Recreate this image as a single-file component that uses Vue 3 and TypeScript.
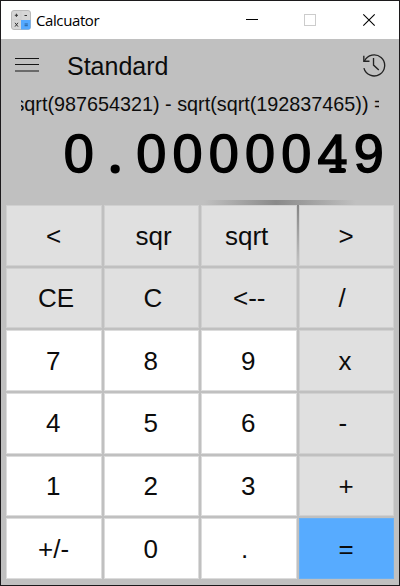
<script setup lang="ts">
interface Key {
  label: string
  kind: 'fn' | 'num' | 'eq' | 'fn hover'
}

const fn = (label: string): Key => ({ label, kind: 'fn' })
const num = (label: string): Key => ({ label, kind: 'num' })

const keys: Key[] = [
  fn('<'), fn('sqr'), fn('sqrt'), { label: '>', kind: 'fn hover' },
  fn('CE'), fn('C'), fn('<--'), fn('/'),
  num('7'), num('8'), num('9'), fn('x'),
  num('4'), num('5'), num('6'), fn('-'),
  num('1'), num('2'), num('3'), fn('+'),
  num('+/-'), num('0'), num('.'), { label: '=', kind: 'eq' },
]

// Labels start further left the longer they are
const indent = (label: string): string => `${39 - 8 * Math.floor(label.length / 2)}px`

const expression = 'sqrt(987654321) - sqrt(sqrt(192837465)) ='
const result = '0.0000049'.split('')
const glyphClass = (c: string): string => (c === '.' ? 'point' : c === '4' ? 'four' : '')
</script>

<template>
  <div class="window">
    <header class="titlebar">
      <svg class="app-icon" width="20" height="20" viewBox="0 0 20 20">
        <rect x="0.5" y="0.5" width="19" height="19" rx="2.5" fill="#d6d6d6" stroke="#b9b9b9" />
        <path d="M10 10H19.5V17.5Q19.5 19.5 17.5 19.5H10Z" fill="#55a9ff" />
        <path d="M10 1V10M1 10H10" stroke="#cacaca" stroke-width="0.7" />
        <path d="M3.8 5.3H7M5.4 3.7V6.9M13.5 5.5H16M4 12.8L7 16.6M7 12.8L4 16.6" stroke="#333" fill="none" />
        <path d="M13.6 14H16.8M13.6 15.7H16.8" stroke="#245a91" stroke-width="0.9" />
      </svg>
      <span class="app-name">Calcuator</span>
      <svg class="controls" width="130" height="14" viewBox="0 0 130 14">
        <path d="M0 6.5H12" stroke="#000" />
        <rect x="58.5" y="1.5" width="11" height="11" fill="none" stroke="#ccc" />
        <path d="M117.3 1.3L128.7 12.7M128.7 1.3L117.3 12.7" stroke="#000" stroke-width="1.1" />
      </svg>
    </header>

    <div class="mode-row">
      <svg class="menu" width="26" height="18" viewBox="0 0 26 18">
        <path d="M1 2.5H25M1 8.5H25M1 15H25" stroke="#151515" stroke-width="1.2" />
      </svg>
      <span class="mode">Standard</span>
      <svg class="history" width="24" height="24" viewBox="0 0 25 25" fill="none" stroke="#222" stroke-width="1.4">
        <path d="M2.6 8.4A11 11 0 1 1 2 15.8" />
        <path d="M1.9 2.8V8.6H7.8" />
        <path d="M12 5.2V12.6L17.5 17.8" />
      </svg>
    </div>

    <div class="expression"><span>{{ expression }}</span></div>

    <div class="result">
      <span v-for="(c, i) in result" :key="i" :class="glyphClass(c)">{{ c }}</span>
    </div>

    <div class="keypad">
      <button
        v-for="key in keys"
        :key="key.label"
        :class="['key', key.kind]"
        :style="{ paddingLeft: indent(key.label) }"
      >{{ key.label }}</button>
    </div>
  </div>
</template>

<style>
body {
  margin: 0;
}
</style>

<style scoped>
.window {
  box-sizing: border-box;
  width: 400px;
  height: 586px;
  display: flex;
  flex-direction: column;
  border: 1px solid #1c1a1c;
  background: #c0c0c0;
  color: #0c0c0c;
  font-family: "Liberation Sans", Arial, sans-serif;
  overflow: hidden;
}

.titlebar {
  flex: none;
  height: 38px;
  display: flex;
  align-items: center;
  padding: 0 23px 0 10px;
  box-sizing: border-box;
  background: #fff;
}

.app-icon {
  margin-right: 5px;
}

.app-name {
  font: 15px "Open Sans", "Noto Sans", sans-serif;
  letter-spacing: -0.4px;
  padding-bottom: 1px;
  color: #000;
}

.controls {
  margin-left: auto;
}

.mode-row {
  flex: none;
  height: 54px;
  display: flex;
  align-items: center;
  padding: 0 13px 0 13px;
}

.menu {
  margin-bottom: 2px;
}

.mode {
  margin-left: 27px;
  font-size: 25px;
  line-height: 54px;
}

.history {
  margin: 0 0 3px auto;
}

.expression {
  flex: none;
  height: 24px;
  width: 358px;
  margin-left: 20px;
  display: flex;
  justify-content: center;
  overflow: hidden;
  font-size: 19.8px;
  line-height: 22px;
  white-space: pre;
}

.expression span {
  flex: none;
}

.result {
  flex: none;
  height: 83px;
  display: grid;
  grid-template-columns: repeat(9, 36.25px);
  justify-content: end;
  padding-right: 12px;
  font-size: 54px;
  line-height: 73px;
  text-align: center;
  color: #000;
  -webkit-text-stroke: 1.5px #000;
}

.point {
  font-family: "Open Sans", sans-serif;
  font-weight: 700;
  line-height: 71px;
  -webkit-text-stroke: 0;
}

/* Typewriter-style foot under the numeral */
.four {
  position: relative;
}

.four::after {
  content: "";
  position: absolute;
  left: 14px;
  top: 51px;
  width: 17px;
  height: 5px;
  border-radius: 3px;
  background: #000;
}

.keypad {
  flex: 1;
  display: grid;
  grid-template-columns: repeat(4, 1fr);
  grid-template-rows: repeat(6, 1fr);
  column-gap: 2px;
  row-gap: 2px;
  padding: 5px 5px 6px 5px;
  background:
    linear-gradient(90deg, transparent 203px, #8a8a8a 275px, transparent 355px) 0 0 / 100% 5px no-repeat,
    linear-gradient(#858585, transparent) 295px 5px / 4px 56px no-repeat;
}

.key {
  min-width: 0;
  margin: 0;
  padding: 0;
  border: 1px solid #d0d0d0;
  border-radius: 0;
  background: #e0e0e0;
  color: #0c0c0c;
  font: 26px/1 "Liberation Sans", Arial, sans-serif;
  text-align: left;
  white-space: nowrap;
}

.key:nth-child(-n + 4) {
  padding-top: 2px;
}

.key.num {
  background: #fff;
  border-color: #dcdcdc;
}

.key.hover {
  background: #dddddd;
}

.key.eq {
  background: #57abff;
  border-color: #68b0f5;
}
</style>
